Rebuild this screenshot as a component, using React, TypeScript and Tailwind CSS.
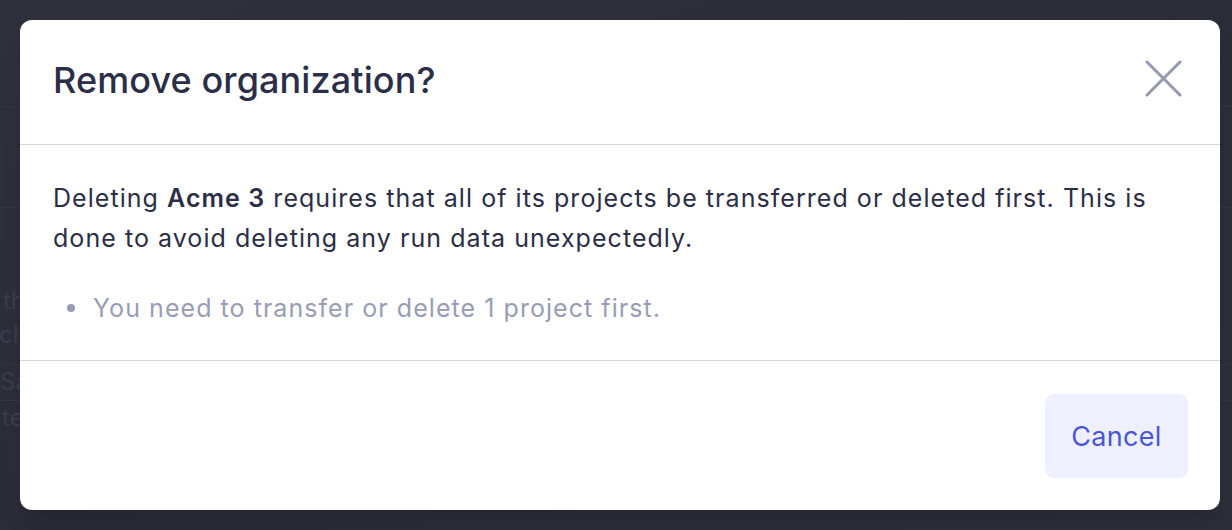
import React from "react";

export default function App() {
  return (
    <div
      className="relative w-[1232px] h-[530px] overflow-hidden bg-gradient-to-br from-[#2e303c] via-[#2a2c38] to-[#2c2e3a]"
      style={{ fontFamily: "Inter, 'Noto Sans', sans-serif" }}
    >
      {/* faint page content behind the backdrop */}
      <div className="flex flex-col text-[24px] text-[#3b3d4b]">
        <div className="h-[107px] border-b border-[#343643]" />
        <div className="h-[101px] border-b border-[#343643]" />
        <div className="pt-[76px] pl-[3px] leading-[34px]">
          <div>the</div>
          <div className="-ml-[4px]">clo</div>
        </div>
        <div className="mt-[12px] border-b border-[#343643]" />
        <div className="pl-[0px] h-[36px] leading-[34px] border-b border-[#343643]">Sa</div>
        <div className="pl-[2px] leading-[34px]">te</div>
      </div>

      {/* modal */}
      <div className="absolute left-[20px] top-[20px] w-[1200px] h-[490px] rounded-[12px] bg-white flex flex-col shadow-xl">
        <div className="h-[125px] border-b border-[#d3d5e2] flex items-center justify-between pl-[33px] pr-[38px]">
          <h2 className="text-[36px] leading-[44px] font-medium text-[#2b2e47] tracking-[0.1px] -mt-[4px]">
            Remove organization?
          </h2>
          <svg width="37" height="37" viewBox="0 0 37 37" className="-mt-[7px]">
            <path d="M2 2 L35 35 M35 2 L2 35" stroke="#9598ae" strokeWidth="3" strokeLinecap="round" />
          </svg>
        </div>
        <div className="h-[216px] border-b border-[#d3d5e2] px-[33px] pt-[33px] text-[25px] leading-[40px] tracking-[1.05px]">
          <p className="text-[#2b2e45]">
            Deleting <span className="font-semibold">Acme 3</span> requires that all of its projects be transferred or deleted first. This is done to avoid deleting any run data unexpectedly.
          </p>
          <ul className="mt-[30px] text-[#999cb4]">
            <li className="flex items-center">
              <span className="ml-[14px] mr-[18px] w-[8px] h-[8px] rounded-full bg-[#999cb4] inline-block" />
              You need to transfer or delete 1 project first.
            </li>
          </ul>
        </div>
        <div className="flex-1 flex items-center justify-end pr-[32px]">
          <button className="w-[143px] h-[84px] pt-[3px] rounded-[9px] bg-[#eef0fd] text-[27px] text-[#4a55d7] flex items-center justify-center tracking-[0.3px]">
            Cancel
          </button>
        </div>
      </div>
    </div>
  );
}
